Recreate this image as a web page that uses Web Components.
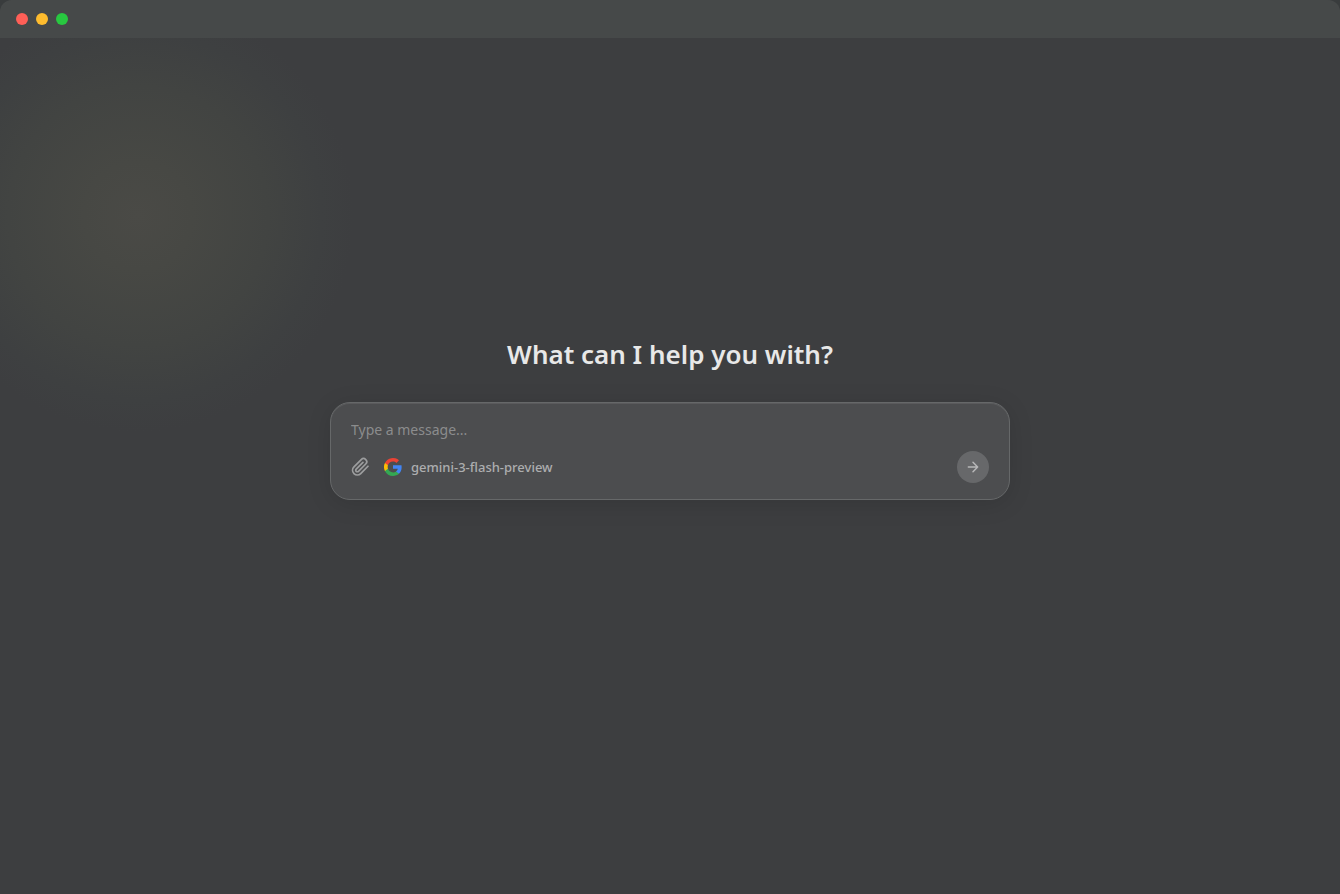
<!DOCTYPE html>
<html lang="en">
<head>
<meta charset="utf-8">
<meta name="viewport" content="width=device-width, initial-scale=1">
<title>Chat</title>
<style>
  html, body { margin: 0; min-height: 100%; background: #393c3d; }
  body { font-family: "Segoe UI", "Noto Sans", sans-serif; color: #e8e8e8; }
</style>
</head>
<body>
<chat-window>
  <title-bar slot="bar"></title-bar>
  <chat-welcome>
    <span slot="heading">What can I help you with?</span>
    <chat-composer>
      <model-picker slot="tools">gemini-3-flash-preview</model-picker>
    </chat-composer>
  </chat-welcome>
</chat-window>
<script>
const define = (name, html, setup) => {
  const template = document.createElement('template');
  template.innerHTML = html;
  customElements.define(name, class extends HTMLElement {
    constructor() {
      super();
      this.attachShadow({ mode: 'open' }).append(template.content.cloneNode(true));
      if (setup) setup(this);
    }
  });
};

define('chat-window', `
  <style>
    :host {
      display: flex; flex-direction: column; min-height: 100vh; box-sizing: border-box;
      border-radius: 12px 12px 0 0; overflow: hidden;
      background: radial-gradient(circle 216px at 138px 216px, #4a4a46 0%, #474844 25%, #424442 60%, #3e4041 85%, #3d3e40 100%);
    }
    main { flex: 1; display: flex; flex-direction: column; }
  </style>
  <slot name="bar"></slot>
  <main><slot></slot></main>`);

define('title-bar', `
  <style>
    :host { display: block; background: linear-gradient(#464949, #464949); }
    header { display: flex; align-items: center; gap: 8px; height: 38px; padding: 0 16px; }
    button { width: 12px; height: 12px; padding: 0; border: 0; border-radius: 50%; }
    .close { background: #ff5f57; }
    .minimize { background: #febc2e; }
    .zoom { background: #28c840; }
  </style>
  <header>
    <button class="close" type="button" aria-label="Close"></button>
    <button class="minimize" type="button" aria-label="Minimize"></button>
    <button class="zoom" type="button" aria-label="Zoom"></button>
  </header>`);

define('chat-welcome', `
  <style>
    :host { flex: 1; display: flex; flex-direction: column; align-items: center; justify-content: center;
      gap: 30px; padding: 0 24px 96px; }
    h1 { margin: 0; font-size: 26px; line-height: 36px; font-weight: 600; text-align: center; }
  </style>
  <h1><slot name="heading"></slot></h1>
  <slot></slot>`);

define('chat-composer', `
  <style>
    :host { display: block; width: 100%; max-width: 680px; }
    form { display: flex; flex-direction: column; gap: 10px; padding: 16px 20px; box-sizing: border-box;
      border: 1px solid #666869; border-radius: 20px; background: #4c4d4f;
      box-shadow: 0 4px 24px rgba(0, 0, 0, .12), inset 0 1px 0 rgba(255, 255, 255, .08); }
    input { width: 100%; height: 22px; box-sizing: border-box; padding: 0; border: 0; outline: 0; background: none;
      font: 400 14px/22px "Segoe UI", "Noto Sans", sans-serif; color: #e8e8e8; }
    input::placeholder { color: #8b8c8d; opacity: 1; }
    .row { display: flex; align-items: center; gap: 14px; }
    button { display: flex; align-items: center; justify-content: center; padding: 0; border: 0; background: none; color: #9c9d9e; }
    .send { width: 32px; height: 32px; margin-left: auto; border-radius: 50%; background: #67686a; color: #b8b8b9; }
    svg { display: block; fill: none; stroke: currentColor; stroke-width: 2.2; stroke-linecap: round; stroke-linejoin: round; }
  </style>
  <form>
    <input type="text" placeholder="Type a message..." aria-label="Message">
    <div class="row">
      <button type="button" aria-label="Attach file">
        <svg width="19" height="20" viewBox="0 0 24 24"><path d="m21.44 11.05-9.19 9.19a6 6 0 0 1-8.49-8.49l9.19-9.19a4 4 0 0 1 5.66 5.66l-9.2 9.19a2 2 0 0 1-2.83-2.83l8.49-8.48"/></svg>
      </button>
      <slot name="tools"></slot>
      <button class="send" type="submit" aria-label="Send">
        <svg width="16" height="16" viewBox="0 0 24 24"><path d="M5 12h14M12 5l7 7-7 7"/></svg>
      </button>
    </div>
  </form>`, host => host.shadowRoot.querySelector('form').addEventListener('submit', e => e.preventDefault()));

define('model-picker', `
  <style>
    :host { display: block; }
    button { display: flex; align-items: center; gap: 9px; padding: 0; border: 0; background: none;
      font: 500 13px/20px "Segoe UI", "Noto Sans", sans-serif; color: #adaeaf; }
    svg { display: block; }
  </style>
  <button type="button">
    <svg width="18" height="18" viewBox="0 0 24 24" aria-hidden="true">
      <path fill="#4285f4" d="M23.52 12.27c0-.85-.08-1.67-.22-2.45H12v4.64h6.46a5.52 5.52 0 0 1-2.4 3.62v3h3.88c2.27-2.09 3.58-5.17 3.58-8.81z"/>
      <path fill="#34a853" d="M12 24c3.24 0 5.96-1.07 7.94-2.92l-3.88-3a7.24 7.24 0 0 1-10.79-3.8H1.26v3.1A12 12 0 0 0 12 24z"/>
      <path fill="#fbbc05" d="M5.27 14.28a7.2 7.2 0 0 1 0-4.56v-3.1H1.26a12 12 0 0 0 0 10.76z"/>
      <path fill="#ea4335" d="M12 4.77c1.76 0 3.34.6 4.58 1.79l3.44-3.44A11.98 11.98 0 0 0 1.26 6.62l4.01 3.1A7.16 7.16 0 0 1 12 4.77z"/>
    </svg>
    <slot></slot>
  </button>`);
</script>
</body>
</html>
